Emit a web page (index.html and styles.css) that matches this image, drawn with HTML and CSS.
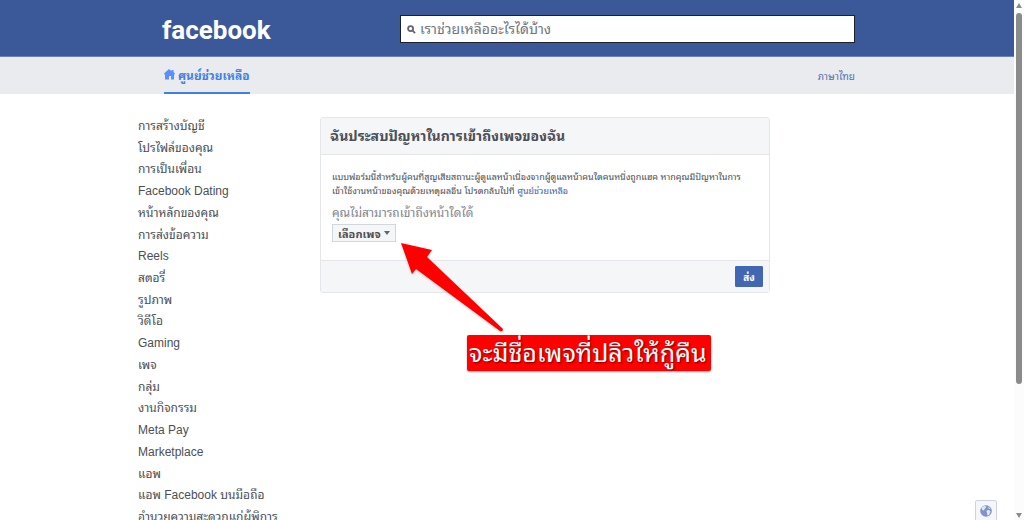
FILE: index.html
```html
<!DOCTYPE html>
<html lang="th">
<head>
<meta charset="utf-8">
<meta name="viewport" content="width=device-width, initial-scale=1">
<title>ศูนย์ช่วยเหลือ</title>
<link rel="stylesheet" href="styles.css">
</head>
<body>
<div class="page">
  <header class="topbar">
    <div class="wrap topbar-inner">
      <a class="logo" href="#">facebook</a>
      <form class="search" role="search">
        <svg class="search-icon" viewBox="0 0 10 10" aria-hidden="true"><circle cx="4" cy="4" r="2.8"/><path d="M6 6l3 3"/></svg>
        <input class="search-input" type="search" aria-label="ค้นหา" placeholder="เราช่วยเหลืออะไรได้บ้าง">
      </form>
    </div>
  </header>
  <nav class="subnav">
    <div class="wrap subnav-inner">
      <a class="subnav-home" href="#">
        <svg class="home-icon" viewBox="0 0 11 11" aria-hidden="true"><path d="M5 0L0 4.500l.5 1H1V10.500H5V7H7V10.500H10V5.500H10.500L11 4.500 9.500 3V1H7.500v1.200z"/></svg>
        ศูนย์ช่วยเหลือ
      </a>
      <a class="subnav-lang" href="#">ภาษาไทย</a>
    </div>
  </nav>
  <div class="main">
    <ul class="topics">
      <li><a href="#">การสร้างบัญชี</a></li>
      <li><a href="#">โปรไฟล์ของคุณ</a></li>
      <li><a href="#">การเป็นเพื่อน</a></li>
      <li><a href="#">Facebook Dating</a></li>
      <li><a href="#">หน้าหลักของคุณ</a></li>
      <li><a href="#">การส่งข้อความ</a></li>
      <li><a href="#">Reels</a></li>
      <li><a href="#">สตอรี่</a></li>
      <li><a href="#">รูปภาพ</a></li>
      <li><a href="#">วิดีโอ</a></li>
      <li><a href="#">Gaming</a></li>
      <li><a href="#">เพจ</a></li>
      <li><a href="#">กลุ่ม</a></li>
      <li><a href="#">งานกิจกรรม</a></li>
      <li><a href="#">Meta Pay</a></li>
      <li><a href="#">Marketplace</a></li>
      <li><a href="#">แอพ</a></li>
      <li><a href="#">แอพ Facebook บนมือถือ</a></li>
      <li><a href="#">อำนวยความสะดวกแก่ผู้พิการ</a></li>
    </ul>
    <form class="card">
      <h1 class="card-title">ฉันประสบปัญหาในการเข้าถึงเพจของฉัน</h1>
      <div class="card-body">
        <p class="intro">แบบฟอร์มนี้สำหรับผู้คนที่สูญเสียสถานะผู้ดูแลหน้าเนื่องจากผู้ดูแลหน้าคนใดคนหนึ่งถูกแฮค หากคุณมีปัญหาในการ<br>เข้าใช้งานหน้าของคุณด้วยเหตุผลอื่น โปรดกลับไปที่ <a href="#">ศูนย์ช่วยเหลือ</a></p>
        <span class="field-label" id="page-label">คุณไม่สามารถเข้าถึงหน้าใดได้</span>
        <button class="picker" type="button" aria-haspopup="listbox" aria-describedby="page-label">เลือกเพจ<span class="caret"></span></button>
      </div>
      <div class="card-footer"><button class="submit" type="button">ส่ง</button></div>
      <svg class="arrow" viewBox="0 0 106 92" aria-hidden="true"><path d="M2 2L33 9 28 16Q66 52 104 88Q104 91 101 90Q59 59 17 28L13 33z"/></svg>
      <div class="note">จะมีชื่อเพจที่ปลิวให้กู้คืน</div>
    </form>
  </div>
  <button class="globe" type="button" aria-label="ภาษา">
    <svg viewBox="0 0 12 12" aria-hidden="true"><circle cx="6" cy="6" r="5.800" fill="#8194c7"/><path d="M1.500 3Q3 .8 5.500 1L6 2.500 4.500 4 4 5.500 2.500 5zM6.500 5.500L9 5l1.500 1.500L9 10 7.500 10.500zM8 1.500l2.500 2L9 4z" fill="#e4e9f5"/></svg>
  </button>
</div>
<div class="scrollbar" aria-hidden="true"><span class="up"></span><span class="thumb"></span><span class="down"></span></div>
</body>
</html>
```
FILE: styles.css
```css
* { box-sizing: border-box; }
body {
  margin: 0;
  height: 100vh;
  overflow: hidden;
  display: flex;
  background: #fff;
  color: #4b4f56;
  font-family: "Liberation Sans", Tahoma, "Noto Sans Thai Looped", Loma, Waree, "Noto Sans Thai", sans-serif;
  font-size: 12px;
}
a { color: inherit; text-decoration: none; }
button, input { font: inherit; }
.page { flex: 1; min-width: 0; position: relative; overflow: hidden; }
.wrap { max-width: 696px; margin: 0 auto; }
.topbar { background: #3b5998; border-bottom: 1px solid #6d7fb8; }
.topbar-inner { display: flex; align-items: center; justify-content: space-between; height: 56px; padding-top: 2px; }
.logo { color: #fff; font: bold 26px/32px Roboto, sans-serif; padding: 2px 0 0 3px; }
.search {
  display: flex;
  align-items: center;
  gap: 4px;
  width: 455px;
  height: 28px;
  padding: 0 6px;
  background: #fff;
  border: 1px solid #1d2129;
}
.search-icon { width: 9px; height: 9px; fill: none; stroke: #606770; stroke-width: 2; }
.search-input { flex: 1; min-width: 0; border: 0; outline: 0; padding: 0; background: none; font-size: 14px; }
.search-input::placeholder { color: #70757e; opacity: 1; }
.subnav { background: #e9ebee; }
.subnav-inner { display: flex; align-items: center; justify-content: space-between; height: 37px; padding-left: 5px; }
.subnav-home {
  display: flex;
  align-items: center;
  gap: 3px;
  height: 37px;
  color: #4080e8;
  border-bottom: 2px solid #4080e8;
  font-weight: bold;
}
.home-icon { width: 11px; height: 11px; fill: #5890ff; }
.subnav-lang { color: #5570ad; font-size: 10px; }
.main { display: flex; align-items: flex-start; max-width: 738px; margin: 0 auto; padding-top: 21px; }
.topics {
  display: grid;
  grid-auto-rows: 1fr;
  align-items: center;
  width: 182px;
  height: 413px;
  margin: 0;
  padding: 0;
  list-style: none;
  line-height: 20px;
}
.card {
  position: relative;
  width: 450px;
  margin-top: 2px;
  border: 1px solid #e4e6ea;
  border-radius: 3px;
}
.card-title {
  margin: 0;
  padding: 0 9px;
  background: #f5f6f7;
  border-bottom: 1px solid #e4e6ea;
  font-size: 14px;
  line-height: 36px;
}
.card-body { padding: 15px 11px 18px; }
.intro { margin: 0 0 7px; font-size: 9px; line-height: 14px; white-space: nowrap; }
.intro a { color: #4762a5; }
.field-label { display: block; color: #7f848e; font-size: 12px; line-height: 16px; margin-bottom: 3px; }
.picker {
  display: flex;
  align-items: center;
  gap: 3px;
  height: 18px;
  padding: 0 5px;
  color: #4b4f56;
  background: #f5f6f7;
  border: 1px solid #d3d6db;
  font-size: 11px;
  font-weight: bold;
}
.caret { border: 3px solid transparent; border-top: 4px solid #606770; border-bottom: 0; }
.card-footer {
  display: flex;
  justify-content: flex-end;
  padding: 5px 6px;
  background: #f5f6f7;
  border-top: 1px solid #e4e6ea;
}
.submit {
  width: 28px;
  height: 21px;
  padding: 0;
  color: #fff;
  background: #4267b2;
  border: 1px solid #4267b2;
  border-radius: 1px;
  font-size: 10px;
  font-weight: bold;
}
.arrow { position: absolute; left: 78px; top: 123px; width: 106px; height: 92px; fill: #f00; filter: drop-shadow(0 1px 1px #0003); }
.note {
  position: absolute;
  left: 146px;
  top: 217px;
  padding: 0 4px 0 2px;
  color: #fff;
  background: #f00;
  border-radius: 2px;
  box-shadow: 0 1px 2px #0005;
  font-size: 25px;
  line-height: 36px;
  white-space: nowrap;
  text-shadow: 1px 1px 2px #0008;
}
.globe {
  position: absolute;
  right: 17px;
  bottom: -2px;
  display: grid;
  place-items: center;
  width: 22px;
  height: 22px;
  padding: 0;
  background: #f5f6f7;
  border: 1px solid #ccd3e2;
  border-radius: 2px;
}
.globe svg { width: 12px; height: 12px; }
.scrollbar { display: flex; flex-direction: column; align-items: center; width: 10px; padding: 3px 0 2px; background: #fcfcfc; }
.up, .down { border: 3px solid transparent; }
.up { border-top: 0; border-bottom: 5px solid #8b8b8b; }
.down { border-bottom: 0; border-top: 5px solid #8b8b8b; margin-top: auto; }
.thumb { width: 6px; height: 371px; margin-top: 5px; border-radius: 3px; background: #8b8b8b; }
```
